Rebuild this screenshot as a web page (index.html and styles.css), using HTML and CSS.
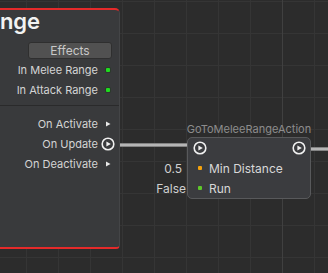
FILE: index.html
```html
<!DOCTYPE html>
<html lang="en">
<head>
    <meta charset="UTF-8">
    <title>Graph</title>
    <link rel="stylesheet" href="styles.css">
</head>
<body>
    <div class="graph">
        <div class="wire wire-in"></div>
        <div class="wire wire-out"></div>

        <div class="node node-big">
            <div class="node-title">Range</div>
            <div class="node-head">
                <button class="effects">Effects</button>
                <div class="port">
                    <span class="port-label">In Melee Range</span>
                    <span class="port-slot"><span class="dot dot-green"></span></span>
                </div>
                <div class="port">
                    <span class="port-label">In Attack Range</span>
                    <span class="port-slot"><span class="dot dot-green"></span></span>
                </div>
            </div>
            <div class="node-body">
                <div class="port">
                    <span class="port-label">On Activate</span>
                    <span class="port-slot">
                        <svg width="8" height="8" viewBox="0 0 8 8"><polygon points="2,1.5 2,6.5 6.5,4" fill="#e8e8e8"/></svg>
                    </span>
                </div>
                <div class="port">
                    <span class="port-label">On Update</span>
                    <span class="port-slot">
                        <svg width="14" height="14" viewBox="0 0 14 14"><circle cx="7" cy="7" r="5.8" fill="none" stroke="#f0f0f0" stroke-width="1.6"/><polygon points="5.4,4.4 5.4,9.6 9.8,7" fill="#f0f0f0"/></svg>
                    </span>
                </div>
                <div class="port">
                    <span class="port-label">On Deactivate</span>
                    <span class="port-slot">
                        <svg width="8" height="8" viewBox="0 0 8 8"><polygon points="2,1.5 2,6.5 6.5,4" fill="#e8e8e8"/></svg>
                    </span>
                </div>
            </div>
        </div>

        <div class="node node-small">
            <div class="node-caption">GoToMeleeRangeAction</div>
            <div class="row row-flow">
                <svg width="14" height="14" viewBox="0 0 14 14"><circle cx="7" cy="7" r="5.8" fill="none" stroke="#f0f0f0" stroke-width="1.6"/><polygon points="5.4,4.4 5.4,9.6 9.8,7" fill="#f0f0f0"/></svg>
                <svg width="14" height="14" viewBox="0 0 14 14"><circle cx="7" cy="7" r="5.8" fill="none" stroke="#f0f0f0" stroke-width="1.6"/><polygon points="5.4,4.4 5.4,9.6 9.8,7" fill="#f0f0f0"/></svg>
            </div>
            <div class="row">
                <span class="value value-num">0.5</span>
                <span class="in-slot"><span class="dot dot-orange"></span></span>
                <span class="row-label">Min Distance</span>
            </div>
            <div class="row">
                <span class="value value-bool">False</span>
                <span class="in-slot"><span class="dot dot-lime"></span></span>
                <span class="row-label">Run</span>
            </div>
        </div>
    </div>
</body>
</html>
```

FILE: styles.css
```css
body {
    margin: 0;
    font-family: Inter, "Noto Sans", sans-serif;
    background-color: #2c2c2c;
}
.graph {
    position: relative;
    width: 328px;
    height: 273px;
    overflow: hidden;
    background-color: #2c2c2c;
    background-image:
        linear-gradient(to right, #404040 1px, transparent 1px),
        linear-gradient(to right, #353535 1px, transparent 1px),
        linear-gradient(to bottom, #353535 1px, transparent 1px);
    background-size: 320px 320px, 32px 32px, 32px 32px;
    background-position: 282px 0, 26px 0, 0 1px;
}

/* wires */
.wire {
    position: absolute;
    height: 4px;
    background: linear-gradient(to bottom, #6a6a6a, #cfcfcf 50%, #6a6a6a);
}
.wire-in {
    left: 116px;
    top: 143px;
    width: 72px;
}
.wire-out {
    left: 311px;
    top: 147px;
    width: 17px;
}

/* nodes */
.node {
    position: absolute;
    box-sizing: border-box;
    background-color: #393a3c;
    color: #d4d4d4;
    font-size: 11px;
}
.node-big {
    left: -40px;
    top: 8px;
    width: 160px;
    height: 241px;
    border-top: 2px solid #e52a2a;
    border-bottom: 2px solid #e52a2a;
    border-right: 1px solid #444547;
    border-radius: 0 5px 4px 0;
}
.node-title {
    padding-left: 13px;
    font-size: 22px;
    font-weight: 600;
    line-height: 22px;
    color: #f2f2f2;
}
.node-head {
    display: flex;
    flex-direction: column;
    align-items: flex-end;
    padding: 10px 7px 5px 0;
    border-bottom: 1px solid #2a2a2b;
}
.effects {
    width: 84px;
    height: 17px;
    margin: 0 0 1px 0;
    padding: 0;
    font-family: inherit;
    font-size: 12px;
    color: #c8c8c8;
    background-color: #515151;
    border: 1px solid #2f2f2f;
    border-radius: 3px;
}
.node-head .port {
    margin-right: -3px;
}
.node-body {
    padding-top: 8px;
}
.port {
    display: flex;
    align-items: center;
    justify-content: flex-end;
    height: 20px;
}
.node-body .port {
    padding-right: 4px;
}
.port-label {
    margin-right: 3px;
}
.port-slot {
    display: flex;
    align-items: center;
    justify-content: center;
    width: 14px;
    height: 14px;
}
.dot {
    display: block;
    width: 4px;
    height: 4px;
    border-radius: 1px;
}
.dot-green {
    background-color: #1fdc1f;
    box-shadow: 0 0 0 1px #2a3a2a;
}
.dot-orange {
    background-color: #f4a20c;
}
.dot-lime {
    background-color: #5ec82a;
}

.node-small {
    left: 187px;
    top: 137px;
    width: 124px;
    height: 62px;
    border: 1px solid #58595b;
    border-radius: 5px;
    background-color: #3b3c3f;
}
.node-caption {
    position: absolute;
    bottom: 100%;
    left: 50%;
    transform: translateX(-50%);
    margin-bottom: 2px;
    white-space: nowrap;
    font-size: 11px;
    color: #8c8c8c;
}
.row {
    position: relative;
    display: flex;
    align-items: center;
    height: 20px;
    padding-left: 5px;
}
.row-flow {
    justify-content: space-between;
    padding-right: 4px;
}
.in-slot {
    display: flex;
    align-items: center;
    justify-content: center;
    width: 14px;
}
.row-label {
    margin-left: 2px;
    font-size: 12px;
    color: #d8d8d8;
}
.value {
    position: absolute;
    right: 100%;
    font-size: 12px;
    color: #d0d0d0;
}
.value-num {
    margin-right: 6px;
}
.value-bool {
    margin-right: 2px;
}
```
